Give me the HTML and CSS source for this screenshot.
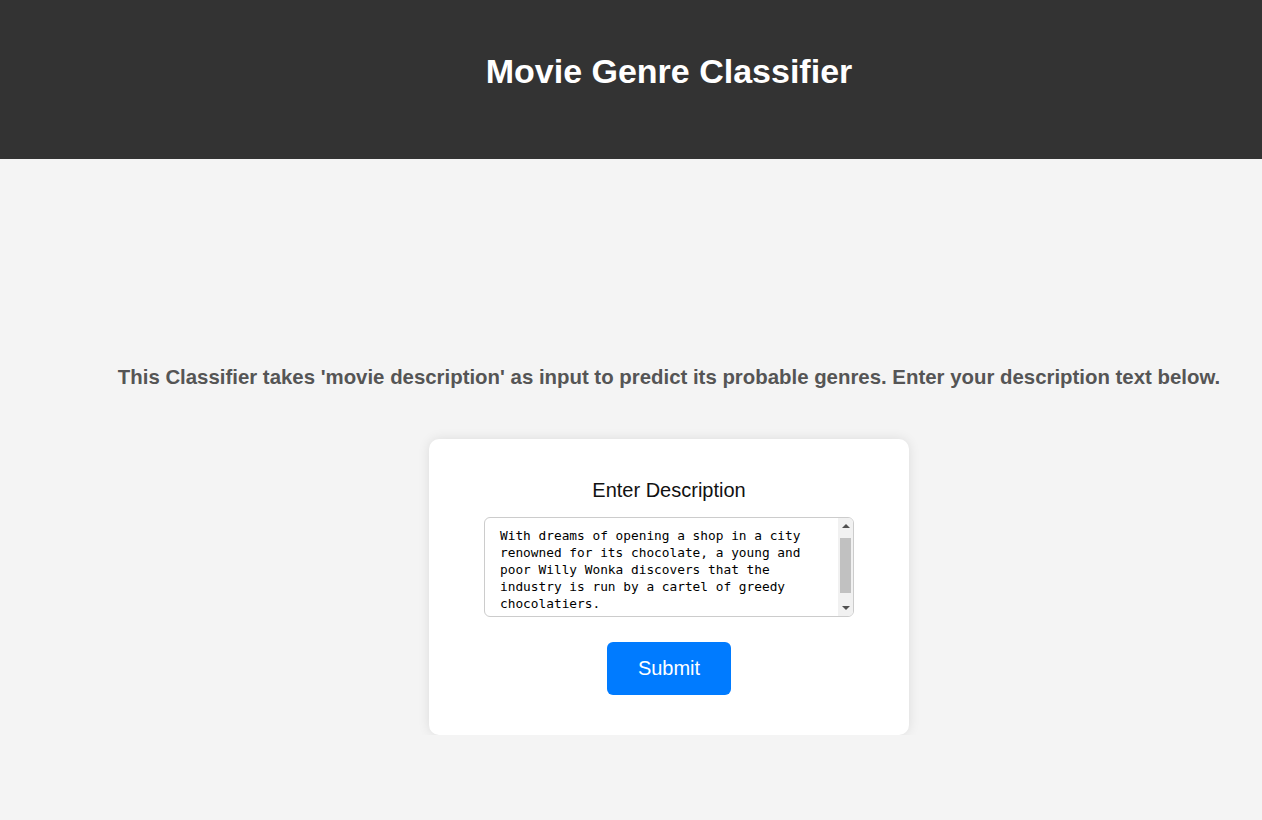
FILE: index.html
```html
<!DOCTYPE html>
<html lang="en">
<head>
<meta charset="utf-8">
<title>Movie Genre Classifier</title>
<link rel="stylesheet" href="styles.css">
</head>
<body>
<header class="site-header">
  <h1 class="site-title">Movie Genre Classifier</h1>
</header>
<main class="main">
  <p class="intro">This Classifier takes 'movie description' as input to predict its probable genres. Enter your description text below.</p>
  <form class="card">
    <label class="card-label" for="desc">Enter Description</label>
    <div class="field">
      <textarea id="desc" class="desc-input">With dreams of opening a shop in a city renowned for its chocolate, a young and poor Willy Wonka discovers that the industry is run by a cartel of greedy chocolatiers.</textarea>
      <div class="fake-scrollbar" aria-hidden="true">
        <span class="sb-arrow sb-up"></span>
        <span class="sb-thumb"></span>
        <span class="sb-arrow sb-down"></span>
      </div>
    </div>
    <button type="button" class="submit-btn">Submit</button>
  </form>
</main>
</body>
</html>
```
FILE: styles.css
```css
html, body {
  margin: 0;
  padding: 0;
}
body {
  background: #f4f4f4;
  font-family: "Liberation Sans", Arial, sans-serif;
  color: #111;
}
.site-header {
  background: #333333;
  height: 159px;
  box-sizing: border-box;
  padding: 52px 0 0 76px;
}
.site-title {
  margin: 0;
  text-align: center;
  color: #ffffff;
  font-size: 34px;
  font-weight: bold;
  line-height: 39px;
}
.main {
  padding: 0 0 0 76px;
  display: flex;
  flex-direction: column;
  align-items: center;
}
.intro {
  margin: 206px 0 0;
  font-size: 20.4px;
  font-weight: bold;
  color: #555555;
  line-height: 24px;
  text-align: center;
  white-space: nowrap;
}
.card {
  margin-top: 50px;
  width: 480px;
  box-sizing: border-box;
  background: #ffffff;
  border-radius: 10px;
  box-shadow: 0 0 12px rgba(0, 0, 0, 0.1);
  padding: 40px 0 40px;
  display: flex;
  flex-direction: column;
  align-items: center;
}
.card-label {
  font-size: 20px;
  line-height: 23px;
  color: #111;
}
.field {
  position: relative;
  margin-top: 15px;
  width: 370px;
  height: 100px;
}
.desc-input {
  display: block;
  width: 100%;
  height: 100%;
  margin: 0;
  box-sizing: border-box;
  border: 1px solid #cccccc;
  border-radius: 6px;
  padding: 9px 30px 9px 15px;
  font-family: "DejaVu Sans Mono", "Liberation Mono", monospace;
  font-size: 12.8px;
  line-height: 17px;
  color: #000;
  resize: none;
  overflow: hidden;
}
.fake-scrollbar {
  position: absolute;
  top: 1px;
  right: 1px;
  bottom: 1px;
  width: 15px;
  background: #f1f1f1;
  border-radius: 0 5px 5px 0;
  display: flex;
  flex-direction: column;
  align-items: center;
}
.sb-arrow {
  width: 0;
  height: 0;
  border-left: 4px solid transparent;
  border-right: 4px solid transparent;
}
.sb-up {
  margin-top: 6px;
  border-bottom: 4px solid #505050;
}
.sb-down {
  margin-top: auto;
  margin-bottom: 6px;
  border-top: 4px solid #505050;
}
.sb-thumb {
  margin-top: 10px;
  width: 11px;
  height: 55px;
  background: #c1c1c1;
}
.submit-btn {
  margin-top: 25px;
  background: #007bff;
  color: #ffffff;
  border: none;
  border-radius: 6px;
  padding: 15px 31px;
  font-family: "Liberation Sans", Arial, sans-serif;
  font-size: 20px;
  line-height: 23px;
  cursor: pointer;
}
```
